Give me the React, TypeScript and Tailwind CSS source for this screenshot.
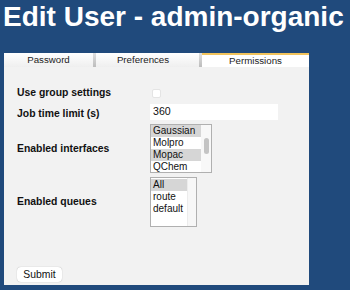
const interfaces = [
  { name: 'Gaussian', selected: true },
  { name: 'Molpro', selected: false },
  { name: 'Mopac', selected: true },
  { name: 'QChem', selected: false },
]

const queues = [
  { name: 'All', selected: true },
  { name: 'route', selected: false },
  { name: 'default', selected: false },
]

function ListRow({ name, selected }: { name: string; selected: boolean }) {
  return (
    <div
      className={`h-[12px] leading-[12px] pl-[2px] text-[10px] text-[#111] ${
        selected ? 'bg-[#d6d6d6]' : ''
      }`}
    >
      {name}
    </div>
  )
}

export default function App() {
  return (
    <div
      className="w-[350px] h-[290px] bg-[#204a7c] overflow-hidden"
      style={{ fontFamily: '"Liberation Sans", Arial, sans-serif' }}
    >
      {/* Page title */}
      <div className="pl-[3px] pt-[1px] text-[28px] leading-[32px] font-bold text-white whitespace-nowrap">
        Edit User - admin-organic
      </div>

      <div className="mt-[20px] ml-[4px] w-[305px] h-[232px] bg-[#f2f2f2] flex flex-col">
        {/* Tabs */}
        <div className="flex h-[14px] text-[9.7px] text-[#222]">
          <div className="w-[89px] bg-gradient-to-b from-white to-[#efefef] text-center leading-[14px]">
            Password
          </div>
          <div className="w-[3px] bg-gradient-to-b from-[#e0e0e0] to-[#bcbcbc]" />
          <div className="w-[103px] pr-[9px] bg-gradient-to-b from-white to-[#efefef] text-center leading-[14px]">
            Preferences
          </div>
          <div className="w-[3px] bg-gradient-to-b from-[#e0e0e0] to-[#bcbcbc]" />
          <div className="flex-1 bg-white border-t-2 border-[#f1c35c] text-center leading-[11px]">
            Permissions
          </div>
        </div>

        {/* Form */}
        <div className="pl-[13px] pt-[16px] grid grid-cols-[133px_1fr] text-[10.4px] font-bold text-[#111]">
          <div className="h-[20px] flex items-center">Use group settings</div>
          <div className="h-[20px] flex items-center">
            <div className="ml-[2px] w-[9px] h-[9px] rounded-[2px] bg-white border border-[#e4e4e4]" />
          </div>

          <div className="mt-[1px] h-[16px] flex items-center pt-[4px]">Job time limit (s)</div>
          <div className="mt-[1px] h-[16px] w-[128px] bg-white pl-[3px] flex items-center font-normal text-[10.6px] text-[#111]">
            360
          </div>

          <div className="mt-[4px] h-[49px] flex items-center">Enabled interfaces</div>
          <div className="mt-[4px] h-[49px] w-[62px] bg-white border border-[#b0b0b0] flex overflow-hidden font-normal">
            <div className="flex-1">
              {interfaces.map((i) => (
                <ListRow key={i.name} {...i} />
              ))}
            </div>
            <div className="w-[10px] bg-[#f8f8f8] pt-[13px] pl-[3px]">
              <div className="w-[5px] h-[16px] rounded-full bg-[#c4c4c4]" />
            </div>
          </div>

          <div className="mt-[4px] h-[50px] flex items-center">Enabled queues</div>
          <div className="mt-[4px] h-[50px] w-[47px] bg-white border border-[#b0b0b0] flex overflow-hidden font-normal">
            <div className="flex-1 pt-[1px]">
              {queues.map((q) => (
                <ListRow key={q.name} {...q} />
              ))}
            </div>
            <div className="w-[9px] bg-[#f7f7f7] border-l border-[#ececec]" />
          </div>
        </div>

        <div className="pl-[13px] mt-[34px]">
          <button className="w-[45px] h-[15px] rounded-[4px] bg-white text-[10.4px] leading-[15px] text-[#111] shadow-[0_0_1px_rgba(0,0,0,0.35)]">
            Submit
          </button>
        </div>
      </div>
    </div>
  )
}
